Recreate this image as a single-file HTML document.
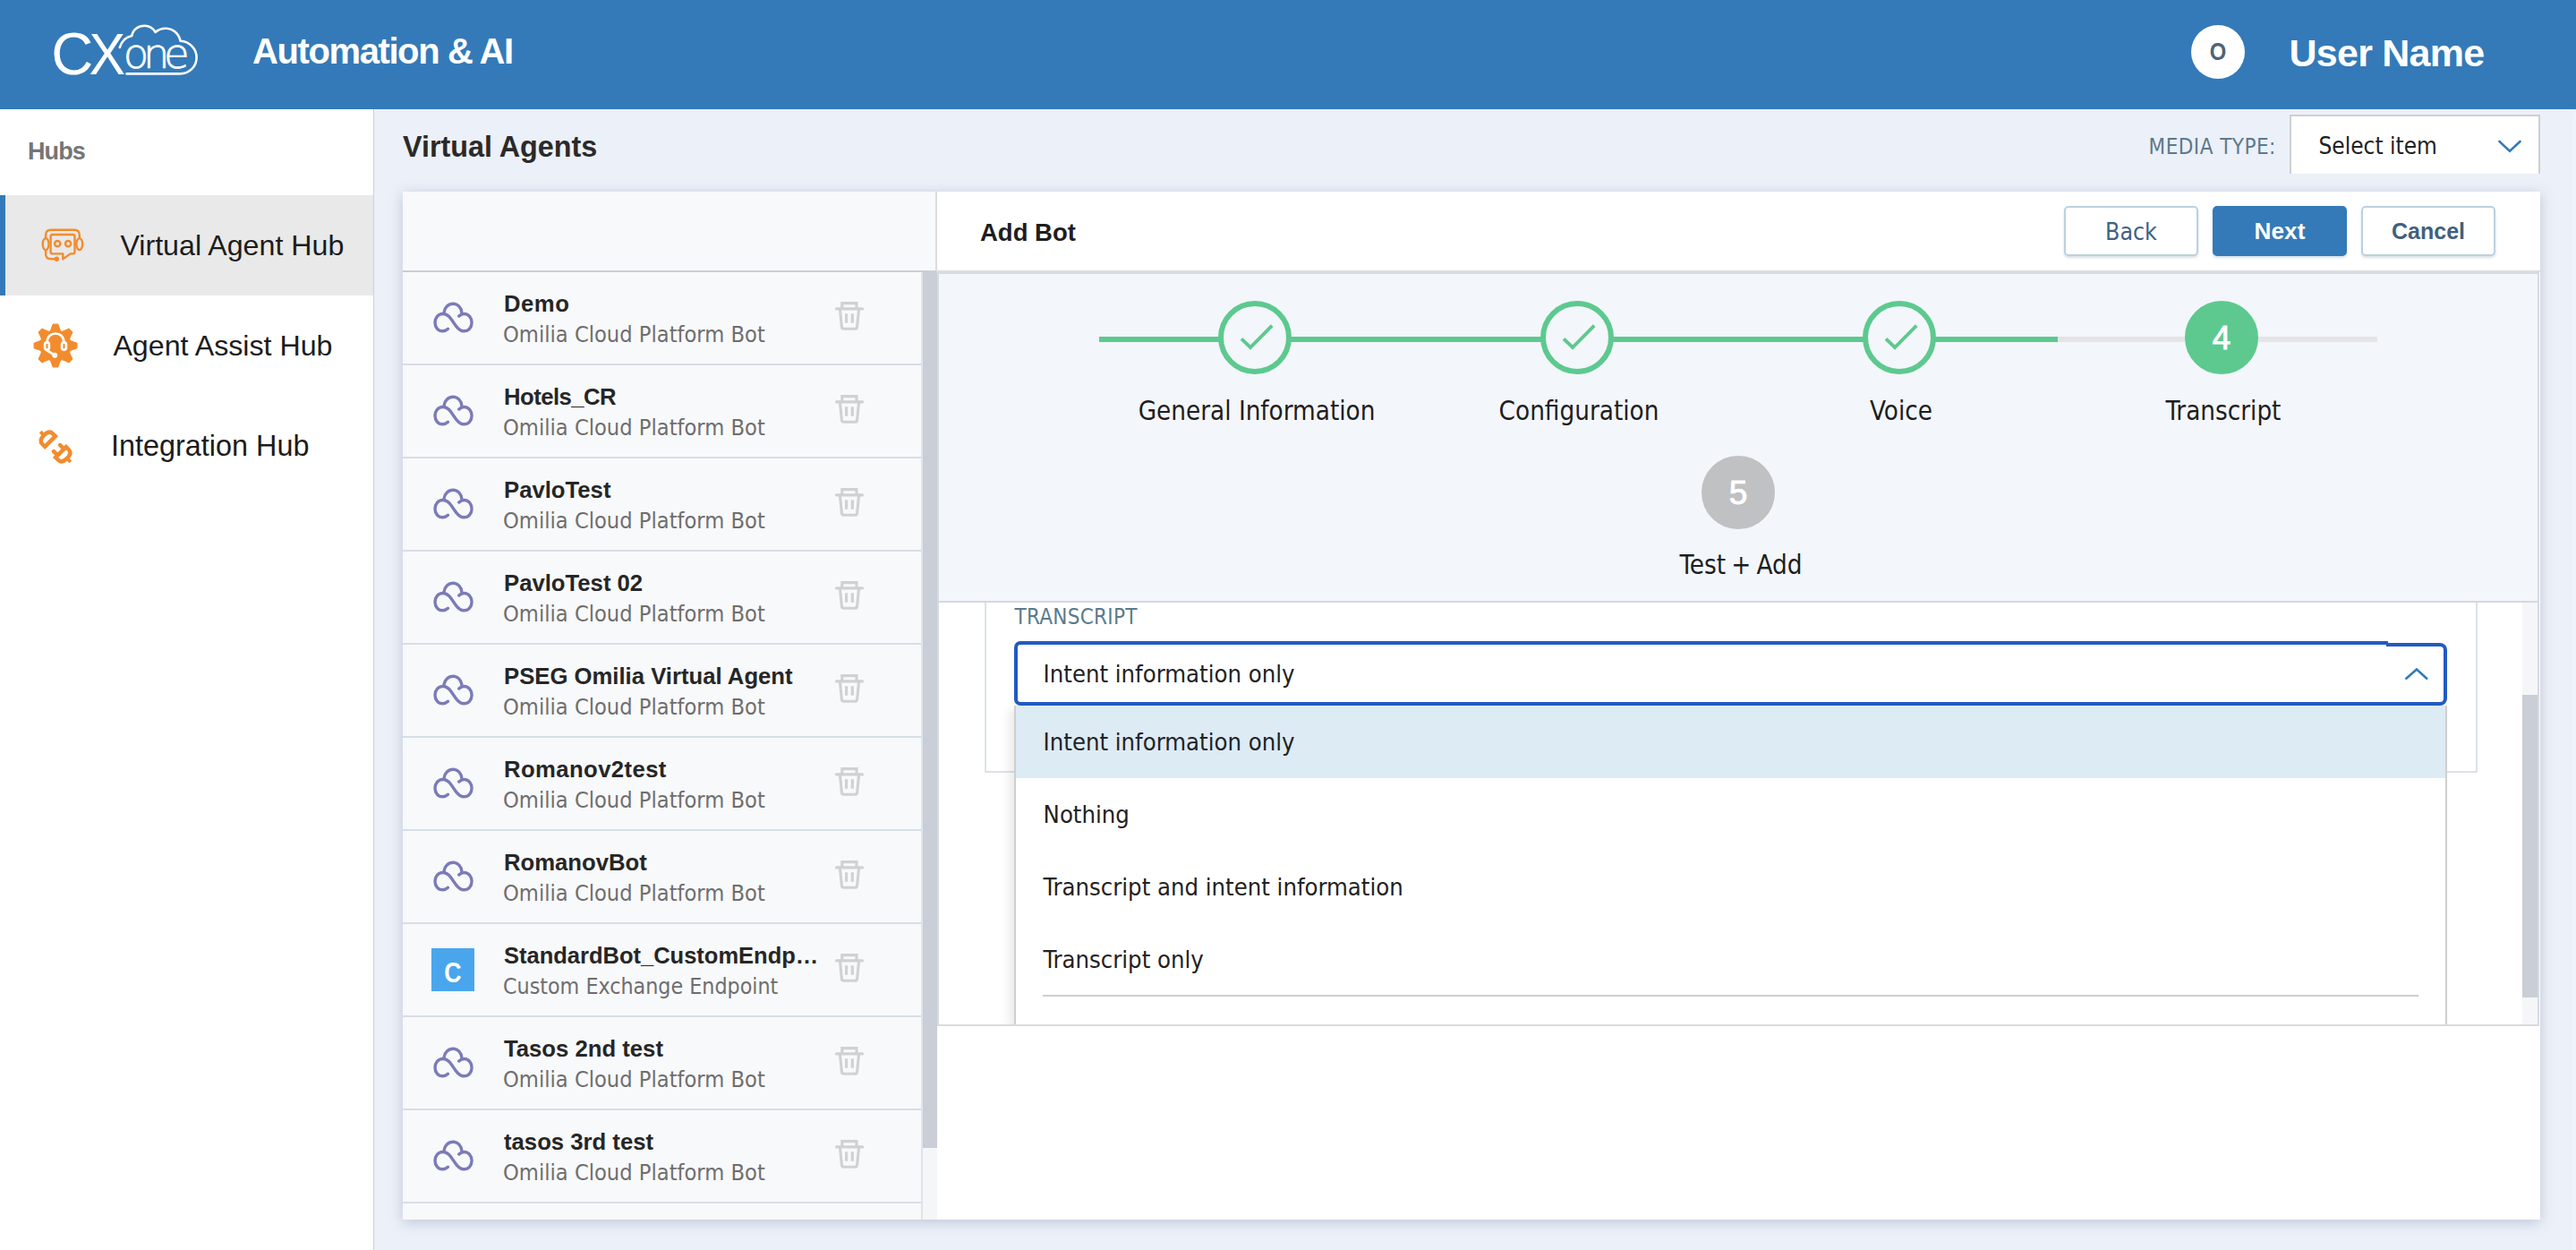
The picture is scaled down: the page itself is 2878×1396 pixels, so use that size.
<!DOCTYPE html>
<html lang="en">
<head>
<meta charset="utf-8">
<title>Automation &amp; AI - Virtual Agents</title>
<style>
*{box-sizing:border-box;margin:0;padding:0}
html,body{width:2878px;height:1396px;overflow:hidden}
body{position:relative;background:#ecf0f8;font-family:"Liberation Sans",sans-serif;color:#222}
.abs{position:absolute}
.t{position:absolute;white-space:nowrap;line-height:1}
.os{font-family:"DejaVu Sans Condensed","DejaVu Sans","Liberation Sans",sans-serif;font-stretch:condensed}
.sb{font-family:"Liberation Sans",sans-serif;font-weight:bold}

/* top bar */
#top{position:absolute;left:0;top:0;width:2878px;height:121.5px;background:#347ab8}
#appname{left:282px;top:37.1px;font-size:40px;font-weight:bold;color:#fff;letter-spacing:-1.4px}
#avatar{position:absolute;left:2448px;top:27.5px;width:60px;height:60px;border-radius:50%;background:#fff}
#avl{left:0;width:60px;top:17px;text-align:center;font-size:27px;font-weight:bold;color:#4d6377;transform:scaleX(.88)}
#uname{left:2557.5px;top:37.6px;font-size:43px;font-weight:bold;color:#fff;letter-spacing:-.75px}

/* sidebar */
#side{position:absolute;left:0;top:121.5px;width:418px;height:1274.5px;background:#fff;border-right:1.5px solid #ccd0d7}
#hubs{left:31px;top:155.8px;font-size:27px;font-weight:bold;color:#757575;letter-spacing:-.9px}
.nav{position:absolute;left:0;width:417px;height:112px}
.nav.sel{background:#e9e9e9;border-left:6px solid #347ab8}
.navt{font-size:32.2px;color:#1c1c1c}

/* main */
#ptitle{left:450px;top:147.7px;font-size:32.3px;color:#2a2a2a}
#mlabel{left:2400.6px;top:152px;font-size:24px;color:#5b7a8c;letter-spacing:.45px}
#msel{position:absolute;left:2558px;top:128px;width:280px;height:66px;background:#fff;border:2px solid #cfcfcf;border-bottom:0}
#mselt{left:2590.4px;top:150px;font-size:26px;color:#222}

#card{position:absolute;left:450px;top:214px;width:2388px;height:1148px;background:#fff;box-shadow:0 3px 14px rgba(105,125,160,.36)}
#lhead{position:absolute;left:0;top:0;width:597px;height:90px;background:#f8f9fb;border-bottom:2px solid #cbced2;border-right:2px solid #dcdcdc}
#list{position:absolute;left:0;top:90px;width:581px;height:1058px;background:#f8f9fb;overflow:hidden;border-right:2px solid #dfe4eb}
.row{position:absolute;left:0;width:579px;height:104px;border-bottom:2px solid #d6dee7}
.nm{left:113px;font-size:25.7px;color:#262626}
.sub{left:112px;font-size:25.2px;color:#6e6e6e}
.cl{position:absolute;left:20px;top:16px}
.tr{position:absolute;left:481px;top:31px}
#lsb{position:absolute;left:581px;top:90px;width:16px;height:1058px;background:#f5f6f8}
#lsbt{position:absolute;left:0;top:0;width:16px;height:978px;background:#c9ced7}

#rhead{position:absolute;left:597px;top:0;width:1791px;height:88px;background:#fff}
#addbot{left:645px;top:245.7px}
.btn{position:absolute;top:16px;width:150px;height:56px;border-radius:5px;border:2px solid #bdd0de;background:#fff;box-shadow:0 2px 3px rgba(100,130,160,.25)}
.btn span{position:absolute;left:0;width:100%;text-align:center;top:14.2px;line-height:1;font-size:25px;font-weight:bold;color:#42607c}
.btn.pri{background:#347ab8;border-color:#347ab8}
.btn.pri span{color:#fff}
#band{position:absolute;left:597px;top:88px;width:1791px;height:2px;background:#dedede}
#scr{position:absolute;left:597px;top:90px;width:1790px;height:842px;overflow:hidden;background:#fff;border:2px solid #d6dbe0}
#scri{position:absolute;left:-1px;top:0;width:1789px;height:840px}
#steps{position:absolute;z-index:3;left:0;top:0;width:1787px;height:367px;background:#f3f6fa;border-bottom:2px solid #d2d9df}
.ln{position:absolute;top:70px;height:6px}
.circ{position:absolute;width:82px;height:82px;border-radius:50%;border:6px solid #5dc98f}
.circ.fill{background:#5dc98f}
.circ.gray{background:#c0c1c3;border-color:#c0c1c3}
.num{position:absolute;left:-6px;width:82px;text-align:center;top:17.2px;font-size:37px;line-height:1;font-weight:normal;color:#fff;-webkit-text-stroke:1px #fff}
.slab{position:absolute;width:400px;text-align:center;font-size:29.3px;line-height:1;color:#1e1e1e;white-space:nowrap}
#fbox{position:absolute;left:52px;top:340px;width:1668px;height:217px;border:2px solid #dde2e8}
#tlabel{font-size:24px;color:#5b7a8c;letter-spacing:.25px}
#dd{position:absolute;left:85px;top:410px;width:1535px;height:72px;border:4px solid #215ac2;border-right:0;border-radius:7px 0 0 7px;background:#fff}
#ddb{position:absolute;left:1618px;top:412px;width:68px;height:70px;border:4px solid #215ac2;border-left:0;border-radius:0 8px 8px 0;background:#fff}
#ddv{font-size:27.2px;color:#222}
#menu{position:absolute;left:85px;top:482px;width:1601px;height:420px;background:#fff;border-left:2px solid #cfcfcf;border-right:2px solid #cfcfcf;box-shadow:-6px 4px 10px rgba(0,0,0,.08)}
.opt{position:absolute;left:0;width:1597px;height:81px}
.opt.hi{background:#ddebf5}
.opt span{position:absolute;left:30.6px;top:27px;line-height:1;font-size:27.2px;color:#222;white-space:nowrap}
#sep{position:absolute;left:30px;top:323px;width:1537px;height:2px;background:#cfcfcf}
#rsb{position:absolute;left:1770px;top:366px;width:17px;height:472px;background:#f5f6f8}
#rsbt{position:absolute;left:0;top:104px;width:17px;height:338px;background:#c9ced7}
</style>
</head>
<body>

<!-- TOP BAR -->
<div id="top">
  <svg class="abs" style="left:50px;top:20px" width="200" height="80" viewBox="50 20 200 80">
    <text x="57.2" y="83.2" font-family="Liberation Sans, sans-serif" font-size="67" fill="#fff" textLength="47" lengthAdjust="spacingAndGlyphs">C</text>
    <text x="99.6" y="83" font-family="Liberation Sans, sans-serif" font-size="64.6" fill="#fff" textLength="40.6" lengthAdjust="spacingAndGlyphs">X</text>
    <path d="M133.8 53 C136 45.5 140.5 41.3 147.3 40 C148.5 33 154.5 28.8 161.5 28.8 C166.5 28.8 171 31.5 173.6 36 C177 33 181 31.6 185.5 31.8 C193.5 32.2 199.8 37.5 201.6 45.8 C212 46.5 219.6 54.5 219.6 64.3 C219.6 74.5 211.5 82.4 201 82.4 L141.5 82.4" fill="none" stroke="#fff" stroke-width="2.6" stroke-linecap="round" stroke-linejoin="round"/>
    <text x="137.8" y="76.4" font-family="DejaVu Sans Light, DejaVu Sans, Liberation Sans, sans-serif" font-weight="200" font-size="46.5" fill="#fff" stroke="#fff" stroke-width="0.7" letter-spacing="-6.3">one</text>
  </svg>
  <div class="t" id="appname">Automation &amp; AI</div>
  <div id="avatar"><div class="t" id="avl">O</div></div>
  <div class="t" id="uname">User Name</div>
</div>

<!-- SIDEBAR -->
<div id="side"></div>
<div class="t" id="hubs">Hubs</div>

<div class="nav sel" style="top:218px"></div>
<div class="nav" style="top:330px"></div>
<div class="nav" style="top:442px"></div>
<svg class="abs" style="left:30px;top:240px" width="80" height="60" viewBox="0 0 80 60"><g fill="none" stroke="#f28c2e" stroke-width="2.4" stroke-linecap="round" stroke-linejoin="round"><path d="M21.1 26 V22.6 Q21.1 16.8 26.9 16.8 H53 Q58.8 16.8 58.8 22.6 V26"/><ellipse cx="21.1" cy="32.6" rx="3.4" ry="6.5"/><ellipse cx="58.8" cy="32.6" rx="3.4" ry="6.5"/><path d="M28.8 22 H51.3 Q53.5 22 53.5 24.2 V41.2 Q53.5 43.4 51.3 43.4 H48.6 L40.3 49.4 V43.4 H28.8 Q26.6 43.4 26.6 41.2 V24.2 Q26.6 22 28.8 22 Z"/><circle cx="34.2" cy="32.1" r="3.1"/><circle cx="46.1" cy="32.1" r="3.1"/><path d="M21.1 39.2 V43.6 Q21.1 49.2 26.7 49.2 H31.5"/><circle cx="33.4" cy="49.2" r="1.5" fill="#f28c2e"/></g></svg>
<svg class="abs" style="left:32px;top:356px" width="60" height="60" viewBox="-30 -30 60 60"><path d="M-4.76 -18.39 L-2.76 -23.84 L2.76 -23.84 L4.76 -18.39 Q5.82 -14.04 9.64 -16.37 L14.91 -18.81 L18.81 -14.91 L16.37 -9.64 Q14.04 -5.82 18.39 -4.76 L23.84 -2.76 L23.84 2.76 L18.39 4.76 Q14.04 5.82 16.37 9.64 L18.81 14.91 L14.91 18.81 L9.64 16.37 Q5.82 14.04 4.76 18.39 L2.76 23.84 L-2.76 23.84 L-4.76 18.39 Q-5.82 14.04 -9.64 16.37 L-14.91 18.81 L-18.81 14.91 L-16.37 9.64 Q-14.04 5.82 -18.39 4.76 L-23.84 2.76 L-23.84 -2.76 L-18.39 -4.76 Q-14.04 -5.82 -16.37 -9.64 L-18.81 -14.91 L-14.91 -18.81 L-9.64 -16.37 Q-5.82 -14.04 -4.76 -18.39 Z" fill="#f28c2e" stroke="#f28c2e" stroke-width="1.2" stroke-linejoin="round"/><g fill="none" stroke="#fff" stroke-width="2.7" stroke-linecap="round" stroke-linejoin="round"><path d="M-9.4 -3.6 C-9.4 -10 -5 -13.5 0 -13.5 C5 -13.5 9.4 -10 9.4 -3.6"/><rect x="-11.9" y="-3.6" width="4.8" height="8.2" rx="2.3"/><rect x="7.1" y="-3.6" width="4.8" height="8.2" rx="2.3"/><path d="M-9.8 5 L-2.6 9.6"/><circle cx="-0.8" cy="10.8" r="1.6" fill="#fff"/></g></svg>
<svg class="abs" style="left:31.7px;top:468.7px" width="60" height="60" viewBox="-30 -30 60 60"><g transform="rotate(45)" fill="none" stroke="#f28c2e" stroke-width="4.5" stroke-linejoin="miter"><path d="M-8.45 -8.25 H-12.5 Q-18.25 -8.25 -18.25 0 Q-18.25 8.25 -12.5 8.25 H-8.45 Z"/><path d="M-23.8 0 H-19" stroke-width="3.8"/><path d="M8.45 -8.25 H12.5 Q18.25 -8.25 18.25 0 Q18.25 8.25 12.5 8.25 H8.45 Z"/><path d="M23.8 0 H19" stroke-width="3.8"/><path d="M8 -5 H2.2 M8 5 H2.2" stroke-linecap="round"/></g></svg>
<div class="t navt" id="nav1" style="left:134.4px;top:257.7px">Virtual Agent Hub</div>
<div class="t navt" id="nav2" style="left:126.4px;top:369.7px">Agent Assist Hub</div>
<div class="t navt" id="nav3" style="left:124px;font-size:32.4px;top:481.7px">Integration Hub</div>

<!-- MAIN -->
<div class="abs" style="left:2874px;top:124px;width:4px;height:1272px;background:#eff3fa;border-top-left-radius:4px"></div>
<div class="t sb" id="ptitle">Virtual Agents</div>
<div class="t os" id="mlabel">MEDIA TYPE:</div>
<div id="msel"></div>
<div class="t os" id="mselt">Select item</div>
<svg class="abs" style="left:2788px;top:152px" width="34" height="24" viewBox="0 0 34 24"><path d="M4.5 6 L16 16.8 L27.5 6" fill="none" stroke="#347ab8" stroke-width="2.6" stroke-linecap="round" stroke-linejoin="miter"/></svg>

<div id="card">
  <div id="lhead"></div>
  <div id="list">
    <div class="row" style="top:0px">
      <svg class="cl" width="80" height="70" viewBox="0 0 80 70"><g fill="none" stroke="#7b7bb8" stroke-width="3.4" stroke-linecap="round" stroke-linejoin="round"><path d="M30.5 47.3 C28.6 49.1 26.6 49.8 24.6 49.8 C19.6 49.8 16 45.6 16 40.3 C16 35 19.6 30.5 24.6 30.5 C28.8 30.5 31.4 32.8 33.6 35.8 L39.2 43.7 C41.6 47 44.2 49.8 48.2 49.8 C53.4 49.8 57.1 45.6 57.1 40.3 C57.1 35 53.4 30.5 48.7 30.5 C46.2 30.5 44.2 31.6 42.8 33"/><path d="M26 29.1 C26.6 23.5 31 19.3 36.4 19.3 C41.5 19.3 45.4 23.5 45.9 29.1"/></g></svg>
      <div class="t sb nm" style="top:23px;letter-spacing:.5px">Demo</div>
      <div class="t os sub" style="top:56.8px">Omilia Cloud Platform Bot</div>
      <svg class="tr" width="36" height="36" viewBox="0 0 36 36"><g fill="none" stroke="#d0d1d3" stroke-width="3.1" stroke-linecap="round" stroke-linejoin="round"><path d="M9.8 9.9 V3.6 H26 V9.9" stroke-linejoin="miter" stroke-linecap="butt"/><path d="M3.5 9.9 H32.5"/><path d="M7.4 9.9 L9.4 30 Q9.6 32.2 11.8 32.2 H24.2 Q26.4 32.2 26.6 30 L28.6 9.9"/><path d="M14.6 15.2 V25.8 M21.3 15.2 V25.8" stroke-width="3.2" stroke-linecap="butt"/></g></svg>
    </div>
    <div class="row" style="top:104px">
      <svg class="cl" width="80" height="70" viewBox="0 0 80 70"><g fill="none" stroke="#7b7bb8" stroke-width="3.4" stroke-linecap="round" stroke-linejoin="round"><path d="M30.5 47.3 C28.6 49.1 26.6 49.8 24.6 49.8 C19.6 49.8 16 45.6 16 40.3 C16 35 19.6 30.5 24.6 30.5 C28.8 30.5 31.4 32.8 33.6 35.8 L39.2 43.7 C41.6 47 44.2 49.8 48.2 49.8 C53.4 49.8 57.1 45.6 57.1 40.3 C57.1 35 53.4 30.5 48.7 30.5 C46.2 30.5 44.2 31.6 42.8 33"/><path d="M26 29.1 C26.6 23.5 31 19.3 36.4 19.3 C41.5 19.3 45.4 23.5 45.9 29.1"/></g></svg>
      <div class="t sb nm" style="top:23px;letter-spacing:-.55px">Hotels_CR</div>
      <div class="t os sub" style="top:56.8px">Omilia Cloud Platform Bot</div>
      <svg class="tr" width="36" height="36" viewBox="0 0 36 36"><g fill="none" stroke="#d0d1d3" stroke-width="3.1" stroke-linecap="round" stroke-linejoin="round"><path d="M9.8 9.9 V3.6 H26 V9.9" stroke-linejoin="miter" stroke-linecap="butt"/><path d="M3.5 9.9 H32.5"/><path d="M7.4 9.9 L9.4 30 Q9.6 32.2 11.8 32.2 H24.2 Q26.4 32.2 26.6 30 L28.6 9.9"/><path d="M14.6 15.2 V25.8 M21.3 15.2 V25.8" stroke-width="3.2" stroke-linecap="butt"/></g></svg>
    </div>
    <div class="row" style="top:208px">
      <svg class="cl" width="80" height="70" viewBox="0 0 80 70"><g fill="none" stroke="#7b7bb8" stroke-width="3.4" stroke-linecap="round" stroke-linejoin="round"><path d="M30.5 47.3 C28.6 49.1 26.6 49.8 24.6 49.8 C19.6 49.8 16 45.6 16 40.3 C16 35 19.6 30.5 24.6 30.5 C28.8 30.5 31.4 32.8 33.6 35.8 L39.2 43.7 C41.6 47 44.2 49.8 48.2 49.8 C53.4 49.8 57.1 45.6 57.1 40.3 C57.1 35 53.4 30.5 48.7 30.5 C46.2 30.5 44.2 31.6 42.8 33"/><path d="M26 29.1 C26.6 23.5 31 19.3 36.4 19.3 C41.5 19.3 45.4 23.5 45.9 29.1"/></g></svg>
      <div class="t sb nm" style="top:23px">PavloTest</div>
      <div class="t os sub" style="top:56.8px">Omilia Cloud Platform Bot</div>
      <svg class="tr" width="36" height="36" viewBox="0 0 36 36"><g fill="none" stroke="#d0d1d3" stroke-width="3.1" stroke-linecap="round" stroke-linejoin="round"><path d="M9.8 9.9 V3.6 H26 V9.9" stroke-linejoin="miter" stroke-linecap="butt"/><path d="M3.5 9.9 H32.5"/><path d="M7.4 9.9 L9.4 30 Q9.6 32.2 11.8 32.2 H24.2 Q26.4 32.2 26.6 30 L28.6 9.9"/><path d="M14.6 15.2 V25.8 M21.3 15.2 V25.8" stroke-width="3.2" stroke-linecap="butt"/></g></svg>
    </div>
    <div class="row" style="top:312px">
      <svg class="cl" width="80" height="70" viewBox="0 0 80 70"><g fill="none" stroke="#7b7bb8" stroke-width="3.4" stroke-linecap="round" stroke-linejoin="round"><path d="M30.5 47.3 C28.6 49.1 26.6 49.8 24.6 49.8 C19.6 49.8 16 45.6 16 40.3 C16 35 19.6 30.5 24.6 30.5 C28.8 30.5 31.4 32.8 33.6 35.8 L39.2 43.7 C41.6 47 44.2 49.8 48.2 49.8 C53.4 49.8 57.1 45.6 57.1 40.3 C57.1 35 53.4 30.5 48.7 30.5 C46.2 30.5 44.2 31.6 42.8 33"/><path d="M26 29.1 C26.6 23.5 31 19.3 36.4 19.3 C41.5 19.3 45.4 23.5 45.9 29.1"/></g></svg>
      <div class="t sb nm" style="top:23px">PavloTest 02</div>
      <div class="t os sub" style="top:56.8px">Omilia Cloud Platform Bot</div>
      <svg class="tr" width="36" height="36" viewBox="0 0 36 36"><g fill="none" stroke="#d0d1d3" stroke-width="3.1" stroke-linecap="round" stroke-linejoin="round"><path d="M9.8 9.9 V3.6 H26 V9.9" stroke-linejoin="miter" stroke-linecap="butt"/><path d="M3.5 9.9 H32.5"/><path d="M7.4 9.9 L9.4 30 Q9.6 32.2 11.8 32.2 H24.2 Q26.4 32.2 26.6 30 L28.6 9.9"/><path d="M14.6 15.2 V25.8 M21.3 15.2 V25.8" stroke-width="3.2" stroke-linecap="butt"/></g></svg>
    </div>
    <div class="row" style="top:416px">
      <svg class="cl" width="80" height="70" viewBox="0 0 80 70"><g fill="none" stroke="#7b7bb8" stroke-width="3.4" stroke-linecap="round" stroke-linejoin="round"><path d="M30.5 47.3 C28.6 49.1 26.6 49.8 24.6 49.8 C19.6 49.8 16 45.6 16 40.3 C16 35 19.6 30.5 24.6 30.5 C28.8 30.5 31.4 32.8 33.6 35.8 L39.2 43.7 C41.6 47 44.2 49.8 48.2 49.8 C53.4 49.8 57.1 45.6 57.1 40.3 C57.1 35 53.4 30.5 48.7 30.5 C46.2 30.5 44.2 31.6 42.8 33"/><path d="M26 29.1 C26.6 23.5 31 19.3 36.4 19.3 C41.5 19.3 45.4 23.5 45.9 29.1"/></g></svg>
      <div class="t sb nm" style="top:23px">PSEG Omilia Virtual Agent</div>
      <div class="t os sub" style="top:56.8px">Omilia Cloud Platform Bot</div>
      <svg class="tr" width="36" height="36" viewBox="0 0 36 36"><g fill="none" stroke="#d0d1d3" stroke-width="3.1" stroke-linecap="round" stroke-linejoin="round"><path d="M9.8 9.9 V3.6 H26 V9.9" stroke-linejoin="miter" stroke-linecap="butt"/><path d="M3.5 9.9 H32.5"/><path d="M7.4 9.9 L9.4 30 Q9.6 32.2 11.8 32.2 H24.2 Q26.4 32.2 26.6 30 L28.6 9.9"/><path d="M14.6 15.2 V25.8 M21.3 15.2 V25.8" stroke-width="3.2" stroke-linecap="butt"/></g></svg>
    </div>
    <div class="row" style="top:520px">
      <svg class="cl" width="80" height="70" viewBox="0 0 80 70"><g fill="none" stroke="#7b7bb8" stroke-width="3.4" stroke-linecap="round" stroke-linejoin="round"><path d="M30.5 47.3 C28.6 49.1 26.6 49.8 24.6 49.8 C19.6 49.8 16 45.6 16 40.3 C16 35 19.6 30.5 24.6 30.5 C28.8 30.5 31.4 32.8 33.6 35.8 L39.2 43.7 C41.6 47 44.2 49.8 48.2 49.8 C53.4 49.8 57.1 45.6 57.1 40.3 C57.1 35 53.4 30.5 48.7 30.5 C46.2 30.5 44.2 31.6 42.8 33"/><path d="M26 29.1 C26.6 23.5 31 19.3 36.4 19.3 C41.5 19.3 45.4 23.5 45.9 29.1"/></g></svg>
      <div class="t sb nm" style="top:23px;letter-spacing:.4px">Romanov2test</div>
      <div class="t os sub" style="top:56.8px">Omilia Cloud Platform Bot</div>
      <svg class="tr" width="36" height="36" viewBox="0 0 36 36"><g fill="none" stroke="#d0d1d3" stroke-width="3.1" stroke-linecap="round" stroke-linejoin="round"><path d="M9.8 9.9 V3.6 H26 V9.9" stroke-linejoin="miter" stroke-linecap="butt"/><path d="M3.5 9.9 H32.5"/><path d="M7.4 9.9 L9.4 30 Q9.6 32.2 11.8 32.2 H24.2 Q26.4 32.2 26.6 30 L28.6 9.9"/><path d="M14.6 15.2 V25.8 M21.3 15.2 V25.8" stroke-width="3.2" stroke-linecap="butt"/></g></svg>
    </div>
    <div class="row" style="top:624px">
      <svg class="cl" width="80" height="70" viewBox="0 0 80 70"><g fill="none" stroke="#7b7bb8" stroke-width="3.4" stroke-linecap="round" stroke-linejoin="round"><path d="M30.5 47.3 C28.6 49.1 26.6 49.8 24.6 49.8 C19.6 49.8 16 45.6 16 40.3 C16 35 19.6 30.5 24.6 30.5 C28.8 30.5 31.4 32.8 33.6 35.8 L39.2 43.7 C41.6 47 44.2 49.8 48.2 49.8 C53.4 49.8 57.1 45.6 57.1 40.3 C57.1 35 53.4 30.5 48.7 30.5 C46.2 30.5 44.2 31.6 42.8 33"/><path d="M26 29.1 C26.6 23.5 31 19.3 36.4 19.3 C41.5 19.3 45.4 23.5 45.9 29.1"/></g></svg>
      <div class="t sb nm" style="top:23px">RomanovBot</div>
      <div class="t os sub" style="top:56.8px">Omilia Cloud Platform Bot</div>
      <svg class="tr" width="36" height="36" viewBox="0 0 36 36"><g fill="none" stroke="#d0d1d3" stroke-width="3.1" stroke-linecap="round" stroke-linejoin="round"><path d="M9.8 9.9 V3.6 H26 V9.9" stroke-linejoin="miter" stroke-linecap="butt"/><path d="M3.5 9.9 H32.5"/><path d="M7.4 9.9 L9.4 30 Q9.6 32.2 11.8 32.2 H24.2 Q26.4 32.2 26.6 30 L28.6 9.9"/><path d="M14.6 15.2 V25.8 M21.3 15.2 V25.8" stroke-width="3.2" stroke-linecap="butt"/></g></svg>
    </div>
    <div class="row" style="top:728px">
      <div class="abs" style="left:32px;top:27px;width:48px;height:48px;background:#4aa6ec"><div class="t" style="left:0;width:48px;text-align:center;top:11.6px;font-size:31px;font-weight:bold;color:#fff;transform:scaleX(.86)">C</div></div>
      <div class="t sb nm" style="top:23.2px;font-size:25.5px">StandardBot_CustomEndp…</div>
      <div class="t os sub" style="top:57.9px;font-size:24.75px">Custom Exchange Endpoint</div>
      <svg class="tr" width="36" height="36" viewBox="0 0 36 36"><g fill="none" stroke="#d0d1d3" stroke-width="3.1" stroke-linecap="round" stroke-linejoin="round"><path d="M9.8 9.9 V3.6 H26 V9.9" stroke-linejoin="miter" stroke-linecap="butt"/><path d="M3.5 9.9 H32.5"/><path d="M7.4 9.9 L9.4 30 Q9.6 32.2 11.8 32.2 H24.2 Q26.4 32.2 26.6 30 L28.6 9.9"/><path d="M14.6 15.2 V25.8 M21.3 15.2 V25.8" stroke-width="3.2" stroke-linecap="butt"/></g></svg>
    </div>
    <div class="row" style="top:832px">
      <svg class="cl" width="80" height="70" viewBox="0 0 80 70"><g fill="none" stroke="#7b7bb8" stroke-width="3.4" stroke-linecap="round" stroke-linejoin="round"><path d="M30.5 47.3 C28.6 49.1 26.6 49.8 24.6 49.8 C19.6 49.8 16 45.6 16 40.3 C16 35 19.6 30.5 24.6 30.5 C28.8 30.5 31.4 32.8 33.6 35.8 L39.2 43.7 C41.6 47 44.2 49.8 48.2 49.8 C53.4 49.8 57.1 45.6 57.1 40.3 C57.1 35 53.4 30.5 48.7 30.5 C46.2 30.5 44.2 31.6 42.8 33"/><path d="M26 29.1 C26.6 23.5 31 19.3 36.4 19.3 C41.5 19.3 45.4 23.5 45.9 29.1"/></g></svg>
      <div class="t sb nm" style="top:23px">Tasos 2nd test</div>
      <div class="t os sub" style="top:56.8px">Omilia Cloud Platform Bot</div>
      <svg class="tr" width="36" height="36" viewBox="0 0 36 36"><g fill="none" stroke="#d0d1d3" stroke-width="3.1" stroke-linecap="round" stroke-linejoin="round"><path d="M9.8 9.9 V3.6 H26 V9.9" stroke-linejoin="miter" stroke-linecap="butt"/><path d="M3.5 9.9 H32.5"/><path d="M7.4 9.9 L9.4 30 Q9.6 32.2 11.8 32.2 H24.2 Q26.4 32.2 26.6 30 L28.6 9.9"/><path d="M14.6 15.2 V25.8 M21.3 15.2 V25.8" stroke-width="3.2" stroke-linecap="butt"/></g></svg>
    </div>
    <div class="row" style="top:936px">
      <svg class="cl" width="80" height="70" viewBox="0 0 80 70"><g fill="none" stroke="#7b7bb8" stroke-width="3.4" stroke-linecap="round" stroke-linejoin="round"><path d="M30.5 47.3 C28.6 49.1 26.6 49.8 24.6 49.8 C19.6 49.8 16 45.6 16 40.3 C16 35 19.6 30.5 24.6 30.5 C28.8 30.5 31.4 32.8 33.6 35.8 L39.2 43.7 C41.6 47 44.2 49.8 48.2 49.8 C53.4 49.8 57.1 45.6 57.1 40.3 C57.1 35 53.4 30.5 48.7 30.5 C46.2 30.5 44.2 31.6 42.8 33"/><path d="M26 29.1 C26.6 23.5 31 19.3 36.4 19.3 C41.5 19.3 45.4 23.5 45.9 29.1"/></g></svg>
      <div class="t sb nm" style="top:23px">tasos 3rd test</div>
      <div class="t os sub" style="top:56.8px">Omilia Cloud Platform Bot</div>
      <svg class="tr" width="36" height="36" viewBox="0 0 36 36"><g fill="none" stroke="#d0d1d3" stroke-width="3.1" stroke-linecap="round" stroke-linejoin="round"><path d="M9.8 9.9 V3.6 H26 V9.9" stroke-linejoin="miter" stroke-linecap="butt"/><path d="M3.5 9.9 H32.5"/><path d="M7.4 9.9 L9.4 30 Q9.6 32.2 11.8 32.2 H24.2 Q26.4 32.2 26.6 30 L28.6 9.9"/><path d="M14.6 15.2 V25.8 M21.3 15.2 V25.8" stroke-width="3.2" stroke-linecap="butt"/></g></svg>
    </div>
    <div class="row" style="top:1040px;border-bottom:0"></div>
  </div>
  <div id="lsb"><div id="lsbt"></div></div>

  <div id="rhead">
    <div class="btn" style="left:1259px"><span class="os" style="font-weight:normal;font-size:26.5px;top:13.6px;color:#3f6282">Back</span></div>
    <div class="btn pri" style="left:1425px"><span style="font-size:26.2px;top:13.4px">Next</span></div>
    <div class="btn" style="left:1591px"><span>Cancel</span></div>
  </div>
  <div id="band"></div>
  <div id="scr"><div id="scri">
    <div id="steps">
      <div class="ln" style="left:180px;width:1071px;background:#5dc98f"></div>
      <div class="ln" style="left:1251px;width:357px;background:#e5e5e5"></div>
      <div class="circ" style="left:313px;top:30px;background:#f3f6fa"><svg class="abs" style="left:-6px;top:-6px" width="82" height="82" viewBox="-41 -41 82 82"><path d="M-15 1.4 L-5 11 L19.2 -13.4" fill="none" stroke="#5dc98f" stroke-width="3.9" stroke-linecap="butt" stroke-linejoin="miter"/></svg></div>
      <div class="slab os" style="left:156px;top:139.2px">General Information</div>
      <div class="circ" style="left:673px;top:30px;background:#f3f6fa"><svg class="abs" style="left:-6px;top:-6px" width="82" height="82" viewBox="-41 -41 82 82"><path d="M-15 1.4 L-5 11 L19.2 -13.4" fill="none" stroke="#5dc98f" stroke-width="3.9" stroke-linecap="butt" stroke-linejoin="miter"/></svg></div>
      <div class="slab os" style="left:516px;top:139.2px">Configuration</div>
      <div class="circ" style="left:1033px;top:30px;background:#f3f6fa"><svg class="abs" style="left:-6px;top:-6px" width="82" height="82" viewBox="-41 -41 82 82"><path d="M-15 1.4 L-5 11 L19.2 -13.4" fill="none" stroke="#5dc98f" stroke-width="3.9" stroke-linecap="butt" stroke-linejoin="miter"/></svg></div>
      <div class="slab os" style="left:876px;top:139.2px">Voice</div>
      <div class="circ fill" style="left:1393px;top:30px"><div class="num">4</div></div>
      <div class="slab os" style="left:1236px;top:139.2px">Transcript</div>
      <div class="circ gray" style="left:853px;top:203px"><div class="num">5</div></div>
      <div class="slab os" style="left:697px;top:311.3px;word-spacing:-2.2px">Test + Add</div>
    </div>
    <div id="fbox"></div>
    <div class="t os" id="tlabel" style="left:85.6px;top:370.7px">TRANSCRIPT</div>
    <div id="menu">
      <div class="opt hi" style="top:0"><span class="os">Intent information only</span></div>
      <div class="opt" style="top:81px"><span class="os">Nothing</span></div>
      <div class="opt" style="top:162px"><span class="os">Transcript and intent information</span></div>
      <div class="opt" style="top:243px"><span class="os">Transcript only</span></div>
      <div id="sep"></div>
    </div>
    <div id="dd">
      <div class="t os" id="ddv" style="left:28.6px;top:19.2px">Intent information only</div>
      
    </div>
    <div id="ddb"><svg class="abs" style="left:16.4px;top:20.2px" width="36" height="24" viewBox="0 0 36 24"><path d="M5.5 16.5 L18 5.5 L30 16.5" fill="none" stroke="#347ab8" stroke-width="2.6" stroke-linecap="butt" stroke-linejoin="miter"/></svg></div>
    <div id="rsb"><div id="rsbt"></div></div>
  </div></div>
</div>
<div class="t sb" id="addbot" style="left:1095px;font-size:27.5px;color:#1e1e1e">Add Bot</div>

</body>
</html>
